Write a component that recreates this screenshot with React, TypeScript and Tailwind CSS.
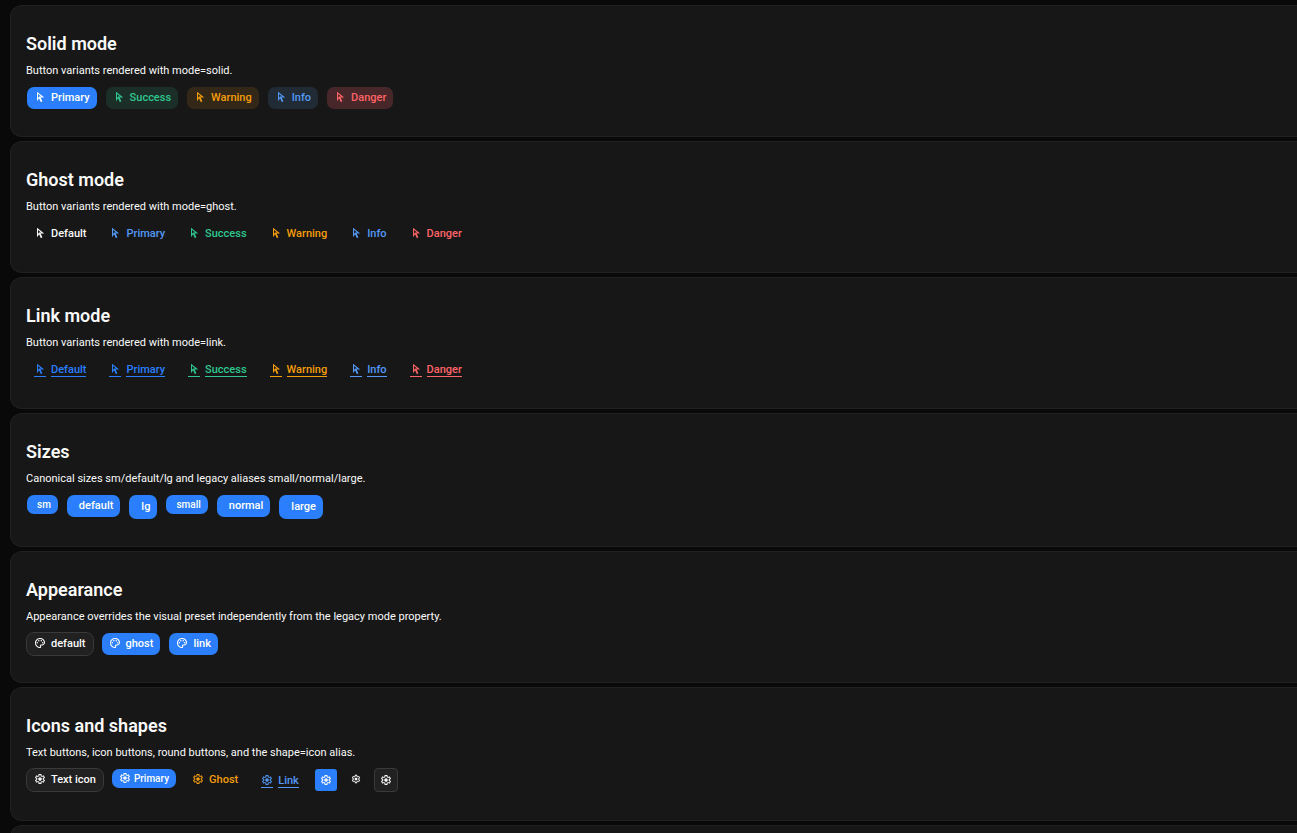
import type { ReactNode } from "react";
import { MdOutlinePalette } from "react-icons/md";

type Tone = "default" | "primary" | "success" | "warning" | "info" | "danger";
type Mode = "solid" | "ghost" | "link";
type Size = "sm" | "md" | "lg";

const solid: Record<Tone, string> = {
  default: "rounded-lg border-[#3a3a3a] bg-[#212121] text-[#fafafa]",
  primary: "rounded-lg border-transparent bg-[#2b7fff] text-white",
  success: "rounded-lg border-transparent bg-[#1c2e28] text-[#2fc78f]",
  warning: "rounded-lg border-transparent bg-[#332818] text-[#f59e0b]",
  info: "rounded-lg border-transparent bg-[#212b36] text-[#5399f5]",
  danger: "rounded-lg border-transparent bg-[#472729] text-[#ff6467]",
};

const plain: Record<Tone, string> = {
  default: "border-transparent text-[#fafafa]",
  primary: "border-transparent text-[#5399f5]",
  success: "border-transparent text-[#2fc78f]",
  warning: "border-transparent text-[#f59e0b]",
  info: "border-transparent text-[#5399f5]",
  danger: "border-transparent text-[#ff6467]",
};

const linked: Record<Tone, string> = {
  ...plain,
  default: "border-transparent text-[#2b7fff]",
  primary: "border-transparent text-[#2b7fff]",
};

const sizes: Record<Size, string> = {
  sm: "h-[21px] gap-[3px] text-[10px]",
  md: "h-6 gap-[5px] text-[11px]",
  lg: "h-[26px] gap-[5px] text-[11px]",
};

function CursorIcon() {
  return (
    <svg viewBox="0 -960 960 960" className="size-3 fill-current" aria-hidden="true">
      <path d="m320-410 79-110h170L320-716v306ZM551-60 406-372 240-140v-760l580 460H530l139 309-118 71ZM399-520Z" />
    </svg>
  );
}

function GearIcon({ className = "size-3" }: { className?: string }) {
  return (
    <svg viewBox="0 -960 960 960" className={`fill-current ${className}`} aria-hidden="true">
      <path d="m370-80-16-128q-13-5-24.5-12T307-235l-119 50L78-375l103-78q-1-7-1-13.5v-27q0-6.5 1-13.5L78-585l110-190 119 50q11-8 23-15t24-12l16-128h220l16 128q13 5 24.5 12t22.5 15l119-50 110 190-103 78q1 7 1 13.5v27q0 6.5-2 13.5l103 78-110 190-118-50q-11 8-23 15t-24 12L590-80H370Zm70-80h79l14-106q31-8 57.5-23.5T639-327l99 41 39-68-86-65q5-14 7-29.5t2-31.5q0-16-2-31.5t-7-29.5l86-65-39-68-99 42q-22-23-48.5-38.5T533-694l-13-106h-79l-14 106q-31 8-57.5 23.5T321-633l-99-41-39 68 86 64q-5 15-7 30t-2 32q0 16 2 31t7 30l-86 65 39 68 99-42q22 23 48.5 38.5T427-266l13 106Zm42-180q58 0 99-41t41-99q0-58-41-99t-99-41q-59 0-99.5 41T342-480q0 58 40.5 99t99.5 41Z" />
    </svg>
  );
}

interface ButtonProps {
  children: string;
  tone?: Tone;
  mode?: Mode;
  size?: Size;
  icon?: ReactNode;
}

function Button({ children, tone = "default", mode = "solid", size = "md", icon }: ButtonProps) {
  const look = mode === "solid" ? solid[tone] : mode === "ghost" ? plain[tone] : linked[tone];
  const line = mode === "link" ? "border-current" : "border-transparent";
  return (
    <button
      type="button"
      className={`flex cursor-pointer items-center border bg-clip-padding px-[7px] font-medium whitespace-nowrap ${sizes[size]} ${look}`}
    >
      <span className={icon ? `flex h-3.5 w-3 items-start border-b ${line}` : "w-0"}>{icon}</span>
      <span className={`border-b leading-[13px] ${line}`}>{children}</span>
    </button>
  );
}

function Section({ title, text, children }: { title: string; text: string; children: ReactNode }) {
  return (
    <section className="rounded-l-xl border border-r-0 border-[#212121] bg-[#171717] py-[26px] pl-[15px]">
      <h2 className="text-lg leading-6 font-semibold">{title}</h2>
      <p className="my-[7px] text-[11px] leading-4">{text}</p>
      <div className="flex items-start gap-[7px]">{children}</div>
    </section>
  );
}

const tones: [Tone, string][] = [
  ["default", "Default"],
  ["primary", "Primary"],
  ["success", "Success"],
  ["warning", "Warning"],
  ["info", "Info"],
  ["danger", "Danger"],
];

const sizeSamples: [Size, string][] = [
  ["sm", "sm"],
  ["md", "default"],
  ["lg", "lg"],
  ["sm", "small"],
  ["md", "normal"],
  ["lg", "large"],
];

export default function App() {
  return (
    <main className="flex h-screen flex-col gap-1 overflow-hidden bg-[#090909] pt-[5px] pl-2.5 font-['Roboto',sans-serif] text-[#fafafa] *:shrink-0">
      <Section title="Solid mode" text="Button variants rendered with mode=solid.">
        {tones.slice(1).map(([tone, label]) => (
          <Button key={tone} tone={tone} icon={<CursorIcon />}>{label}</Button>
        ))}
      </Section>
      <Section title="Ghost mode" text="Button variants rendered with mode=ghost.">
        {tones.map(([tone, label]) => (
          <Button key={tone} tone={tone} mode="ghost" icon={<CursorIcon />}>{label}</Button>
        ))}
      </Section>
      <Section title="Link mode" text="Button variants rendered with mode=link.">
        {tones.map(([tone, label]) => (
          <Button key={tone} tone={tone} mode="link" icon={<CursorIcon />}>{label}</Button>
        ))}
      </Section>
      <Section title="Sizes" text="Canonical sizes sm/default/lg and legacy aliases small/normal/large.">
        {sizeSamples.map(([size, label]) => (
          <Button key={label} tone="primary" size={size}>{label}</Button>
        ))}
      </Section>
      <Section title="Appearance" text="Appearance overrides the visual preset independently from the legacy mode property.">
        <Button icon={<MdOutlinePalette className="size-3" />}>default</Button>
        <Button tone="primary" icon={<MdOutlinePalette className="size-3" />}>ghost</Button>
        <Button tone="primary" icon={<MdOutlinePalette className="size-3" />}>link</Button>
      </Section>
      <Section title="Icons and shapes" text="Text buttons, icon buttons, round buttons, and the shape=icon alias.">
        <Button icon={<GearIcon />}>Text icon</Button>
        <Button tone="primary" size="sm" icon={<GearIcon />}>Primary</Button>
        <Button tone="warning" mode="ghost" icon={<GearIcon />}>Ghost</Button>
        <Button tone="info" mode="link" size="lg" icon={<GearIcon />}>Link</Button>
        <button type="button" aria-label="Settings" className="flex size-6 items-center justify-center rounded-sm border border-transparent bg-[#2b7fff] bg-clip-padding text-white">
          <GearIcon />
        </button>
        <button type="button" aria-label="Round settings" className="flex size-[22px] items-center justify-center rounded-full">
          <GearIcon className="size-2.5" />
        </button>
        <button type="button" aria-label="Icon settings" className="flex size-6 items-center justify-center rounded-sm border border-[#3a3a3a] bg-[#212121]">
          <GearIcon />
        </button>
      </Section>
      <section className="h-[132px] rounded-l-xl border border-r-0 border-[#212121] bg-[#171717]" />
    </main>
  );
}
